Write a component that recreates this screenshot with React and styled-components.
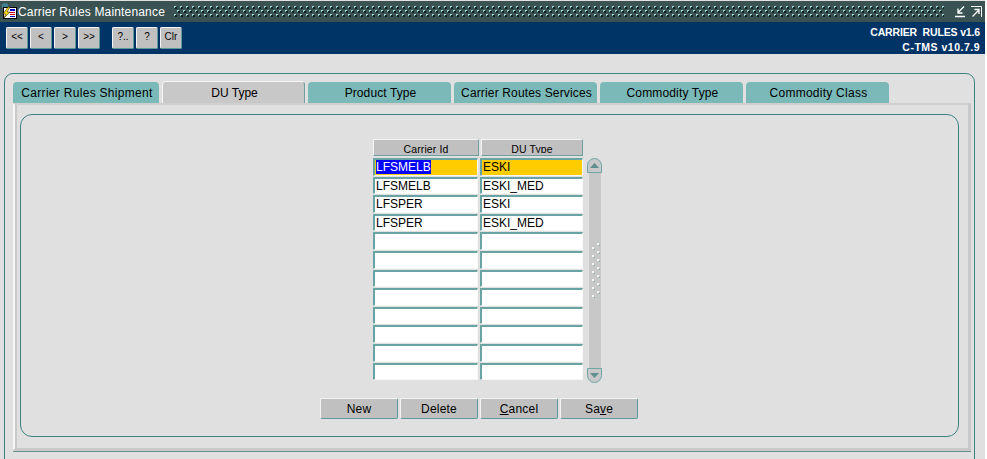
import React from "react";
import styled, { createGlobalStyle } from "styled-components";

const GlobalStyle = createGlobalStyle`
  *, *::before, *::after { box-sizing: border-box; }
  html, body { margin: 0; padding: 0; background: #fff; }
  body { width: 987px; height: 459px; overflow: hidden; font-family: "Liberation Sans", Arial, sans-serif; }
`;

const Window = styled.div`
  width: 985px;
  height: 459px;
  background: #e0e0e0;
  display: flex;
  flex-direction: column;
  overflow: hidden;
`;

const TitleBar = styled.div`
  height: 21px;
  margin-top: 1px;
  flex: none;
  background: #3a5252;
  display: flex;
  align-items: center;
  padding: 0 3px 0 1px;
  color: #fff;
  font-size: 12px;
`;

const TitleText = styled.span`
  margin-left: 1px;
  letter-spacing: 0.17px;
  white-space: nowrap;
`;

const DotStrip = styled.svg`
  flex: 1;
  min-width: 0;
  height: 13px;
  margin: 0 11px 0 9px;
`;

const WinButtons = styled.div`
  display: flex;
  gap: 5px;
  align-items: center;
`;

const Toolbar = styled.div`
  height: 32px;
  flex: none;
  background: #003366;
  display: flex;
  padding: 5px 5px 0 6px;
`;

const ToolGroup = styled.div`
  display: flex;
  gap: 2px;
  margin-right: 12px;
`;

const ToolButton = styled.button`
  width: 22px;
  height: 22px;
  padding: 0 0 3px;
  background: #c0c0c0;
  border: 1px solid;
  border-color: #f4f4f4 #5f9a9a #5f9a9a #f4f4f4;
  border-radius: 2px;
  font-family: inherit;
  font-size: 10px;
  color: #000;
`;

const Version = styled.div`
  margin-left: auto;
  margin-top: -2px;
  color: #fff;
  font-size: 10.5px;
  font-weight: bold;
  text-align: right;
  line-height: 14.5px;
`;

const VersionLine = styled.div`
  letter-spacing: ${p => p.$spacing}px;
  white-space: nowrap;
`;

const Content = styled.div`
  flex: 1;
  padding: 19px 10px 0 4px;
`;

const OuterFrame = styled.div`
  height: 420px;
  border: 1px solid #3f8080;
  border-radius: 9px 9px 0 0;
  padding: 7px 3px 0 8px;
`;

const TabRow = styled.div`
  display: flex;
  height: 22px;
  align-items: flex-end;
`;

const Tab = styled.div`
  width: ${p => p.$w}px;
  margin-right: 3px;
  padding-left: 2px;
  height: ${p => (p.$active ? 22 : 21)}px;
  background: ${p => (p.$active ? "#c8c8c8" : "#7bb9b9")};
  border-radius: 4px 4px 0 0;
  border-top: ${p => (p.$active ? "1px solid #f6f6f6" : "none")};
  border-left: ${p => (p.$active ? "1px solid #f6f6f6" : "none")};
  border-right: ${p => (p.$active ? "1px solid #6f9f9f" : "none")};
  display: flex;
  align-items: center;
  justify-content: center;
  font-size: 12px;
  letter-spacing: ${p => p.$spacing}px;
  color: #000;
  white-space: nowrap;
`;

const TabPage = styled.div`
  height: 348px;
  border-top: 2px solid #cfcfcf;
  border-left: 2px solid #f8f8f8;
  border-right: 3px solid #c8c8c8;
  border-bottom: 3px solid #c8c8c8;
  box-shadow: inset 2px 0 0 #c8c8c8, 0 1px 0 #6a9090;
  padding: 9px 9px 0 5px;
`;

const InnerFrame = styled.div`
  height: 323px;
  border: 1px solid #3f8080;
  border-radius: 12px;
  display: flex;
  flex-direction: column;
  align-items: flex-start;
  padding: 24px 0 0 352px;
`;

const TableWrap = styled.div`
  display: grid;
  grid-template-columns: 105px 103px 19px;
  column-gap: 2px;
`;

const Header = styled.div`
  height: 17px;
  margin-left: ${p => (p.$second ? 1 : 0)}px;
  margin-right: ${p => (p.$second ? 0 : -1)}px;
  margin-bottom: 2px;
  padding-top: 1px;
  background: #c0c0c0;
  border: 1px solid;
  border-color: #f4f4f4 #6f9f9f #6f9f9f #f4f4f4;
`;

const HeaderLabel = styled.div`
  height: 12px;
  overflow: hidden;
  font-size: 10.5px;
  letter-spacing: 0.1px;
  line-height: 16px;
  text-align: center;
`;

const Rows = styled.div`
  grid-column: 1 / 3;
  display: grid;
  grid-template-columns: 105px 103px;
  grid-auto-rows: 17.6px;
  gap: 1px 2px;
`;

const Field = styled.div`
  background: ${p => (p.$current ? "#ffcc00" : "#fff")};
  border: 1px solid #f8f8f8;
  border-top: 2px solid #6aa3a3;
  border-left: 2px solid #6aa3a3;
  border-radius: 1px;
  font-size: 12px;
  line-height: 14px;
  padding-left: 1px;
  white-space: nowrap;
  color: #000;
`;

const Selected = styled.span`
  background: #0000ff;
  color: #fff;
`;

const Scrollbar = styled.div`
  grid-column: 3;
  margin-left: 2px;
  width: 15px;
  height: 225px;
  display: flex;
  flex-direction: column;
  align-items: center;
`;

const ScrollCap = styled.div`
  width: 15px;
  height: 15px;
  flex: none;
  background: #c8c8c8;
  border: 1px solid #6fa5a5;
  border-radius: ${p => (p.$top ? "8px 8px 0 0" : "0 0 8px 8px")};
  display: flex;
  align-items: center;
  justify-content: center;
`;

const ScrollTrack = styled.div`
  width: 12px;
  flex: 1;
  background: #c8c8c8;
  display: flex;
  align-items: center;
  justify-content: center;
`;

const Actions = styled.div`
  display: flex;
  gap: 2px;
  margin: 15px 0 0 -53px;
`;

const ActionButton = styled.button`
  width: 78px;
  height: 21px;
  padding: 0;
  background: #c0c0c0;
  border: 1px solid;
  border-color: #f4f4f4 #5f9a9a #5f9a9a #f4f4f4;
  border-radius: 2px;
  font-family: inherit;
  font-size: 12px;
  letter-spacing: 0.2px;
  color: #000;
`;

const AppIcon = () => (
  <svg width="16" height="17" viewBox="0 0 16 17">
    <ellipse cx="4" cy="3" rx="3.5" ry="3" fill="#3f7f8f" />
    <rect x="2" y="4" width="14" height="12" fill="#000" />
    <rect x="3" y="5" width="12" height="10" fill="#fff" />
    <rect x="9" y="6" width="5" height="2" fill="#0000c0" />
    <rect x="9" y="9" width="5" height="1" fill="#d00000" />
    <rect x="9" y="11" width="5" height="1" fill="#d00000" />
    <rect x="9" y="13" width="5" height="1" fill="#0000c0" />
    <path d="M7 4 L2 11 L5 11 L2 16 L9 9 L6 9 L9 4 Z" fill="#ffe000" stroke="#000" strokeWidth="0.5" />
  </svg>
);

const Dots = () => (
  <DotStrip>
    <defs>
      <pattern id="titleDots" width="6" height="8" patternUnits="userSpaceOnUse">
        <rect x="0" y="1" width="2" height="2" fill="#7fc4c4" />
        <rect x="1" y="2" width="2" height="2" fill="#0e2020" />
        <rect x="0" y="1" width="2" height="1" fill="#9fdcdc" />
        <rect x="3" y="5" width="2" height="2" fill="#7fc4c4" />
        <rect x="4" y="6" width="2" height="2" fill="#0e2020" />
        <rect x="3" y="5" width="2" height="1" fill="#9fdcdc" />
      </pattern>
    </defs>
    <rect width="100%" height="13" fill="url(#titleDots)" />
  </DotStrip>
);

const MinIcon = () => (
  <svg width="11" height="12" viewBox="0 0 11 12">
    <path d="M0 10.5 H10" stroke="#fff" strokeWidth="1.5" />
    <path d="M9 0.5 L3 6.5 M3 2.5 V7 H7.5" stroke="#fff" strokeWidth="1.3" fill="none" />
  </svg>
);

const MaxIcon = () => (
  <svg width="11" height="12" viewBox="0 0 11 12">
    <path d="M0 0.5 H10.5 V11" stroke="#fff" strokeWidth="1" fill="none" />
    <path d="M1.5 10.5 L8 4 M3.5 3.5 H8 V8" stroke="#fff" strokeWidth="1.3" fill="none" />
  </svg>
);

const Arrow = ({ up }) => (
  <svg width="9" height="5" viewBox="0 0 9 5">
    <path d={up ? "M4.5 0 L9 5 H0 Z" : "M0 0 H9 L4.5 5 Z"} fill="#5f8f8f" />
  </svg>
);

const Grip = () => (
  <svg width="12" height="56" viewBox="0 0 12 56">
    {Array.from({ length: 7 }).map((_, i) => (
      <g key={i}>
        <rect x="3" y={i * 8 + 4} width="2" height="2" fill="#f4f4f4" />
        <rect x="5" y={i * 8 + 6} width="1" height="1" fill="#6fa5a5" />
        <rect x="8" y={i * 8} width="2" height="2" fill="#f4f4f4" />
        <rect x="10" y={i * 8 + 2} width="1" height="1" fill="#6fa5a5" />
      </g>
    ))}
  </svg>
);

const tabs = [
  { label: "Carrier Rules Shipment", w: 146, spacing: 0.3 },
  { label: "DU Type", w: 143, spacing: 0, active: true },
  { label: "Product Type", w: 143, spacing: 0.1 },
  { label: "Carrier Routes Services", w: 143, spacing: 0.15 },
  { label: "Commodity Type", w: 143, spacing: 0.15 },
  { label: "Commodity Class", w: 143, spacing: 0.25 },
];

const data = [
  ["LFSMELB", "ESKI"],
  ["LFSMELB", "ESKI_MED"],
  ["LFSPER", "ESKI"],
  ["LFSPER", "ESKI_MED"],
  ["", ""], ["", ""], ["", ""], ["", ""], ["", ""], ["", ""], ["", ""], ["", ""],
];

export default function App() {
  return (
    <Window>
      <GlobalStyle />
      <TitleBar>
        <AppIcon />
        <TitleText>Carrier Rules Maintenance</TitleText>
        <Dots />
        <WinButtons>
          <MinIcon />
          <MaxIcon />
        </WinButtons>
      </TitleBar>
      <Toolbar>
        <ToolGroup>
          <ToolButton>&lt;&lt;</ToolButton>
          <ToolButton>&lt;</ToolButton>
          <ToolButton>&gt;</ToolButton>
          <ToolButton>&gt;&gt;</ToolButton>
        </ToolGroup>
        <ToolGroup>
          <ToolButton>?..</ToolButton>
          <ToolButton>?</ToolButton>
          <ToolButton>Clr</ToolButton>
        </ToolGroup>
        <Version>
          <VersionLine $spacing={-0.15}>CARRIER&nbsp; RULES v1.6</VersionLine>
          <VersionLine $spacing={0.5}>C-TMS v10.7.9</VersionLine>
        </Version>
      </Toolbar>
      <Content>
        <OuterFrame>
          <TabRow>
            {tabs.map(t => (
              <Tab key={t.label} $w={t.w} $spacing={t.spacing} $active={t.active}>{t.label}</Tab>
            ))}
          </TabRow>
          <TabPage>
            <InnerFrame>
              <TableWrap>
                <Header><HeaderLabel>Carrier Id</HeaderLabel></Header>
                <Header $second><HeaderLabel>DU Type</HeaderLabel></Header>
                <span />
                <Rows>
                  {data.map((row, i) => (
                    <React.Fragment key={i}>
                      <Field $current={i === 0}>
                        {i === 0 ? <Selected>{row[0]}</Selected> : row[0]}
                      </Field>
                      <Field $current={i === 0}>{row[1]}</Field>
                    </React.Fragment>
                  ))}
                </Rows>
                <Scrollbar>
                  <ScrollCap $top><Arrow up /></ScrollCap>
                  <ScrollTrack><Grip /></ScrollTrack>
                  <ScrollCap><Arrow /></ScrollCap>
                </Scrollbar>
              </TableWrap>
              <Actions>
                <ActionButton>New</ActionButton>
                <ActionButton>Delete</ActionButton>
                <ActionButton><u>C</u>ancel</ActionButton>
                <ActionButton>Sa<u>v</u>e</ActionButton>
              </Actions>
            </InnerFrame>
          </TabPage>
        </OuterFrame>
      </Content>
    </Window>
  );
}
